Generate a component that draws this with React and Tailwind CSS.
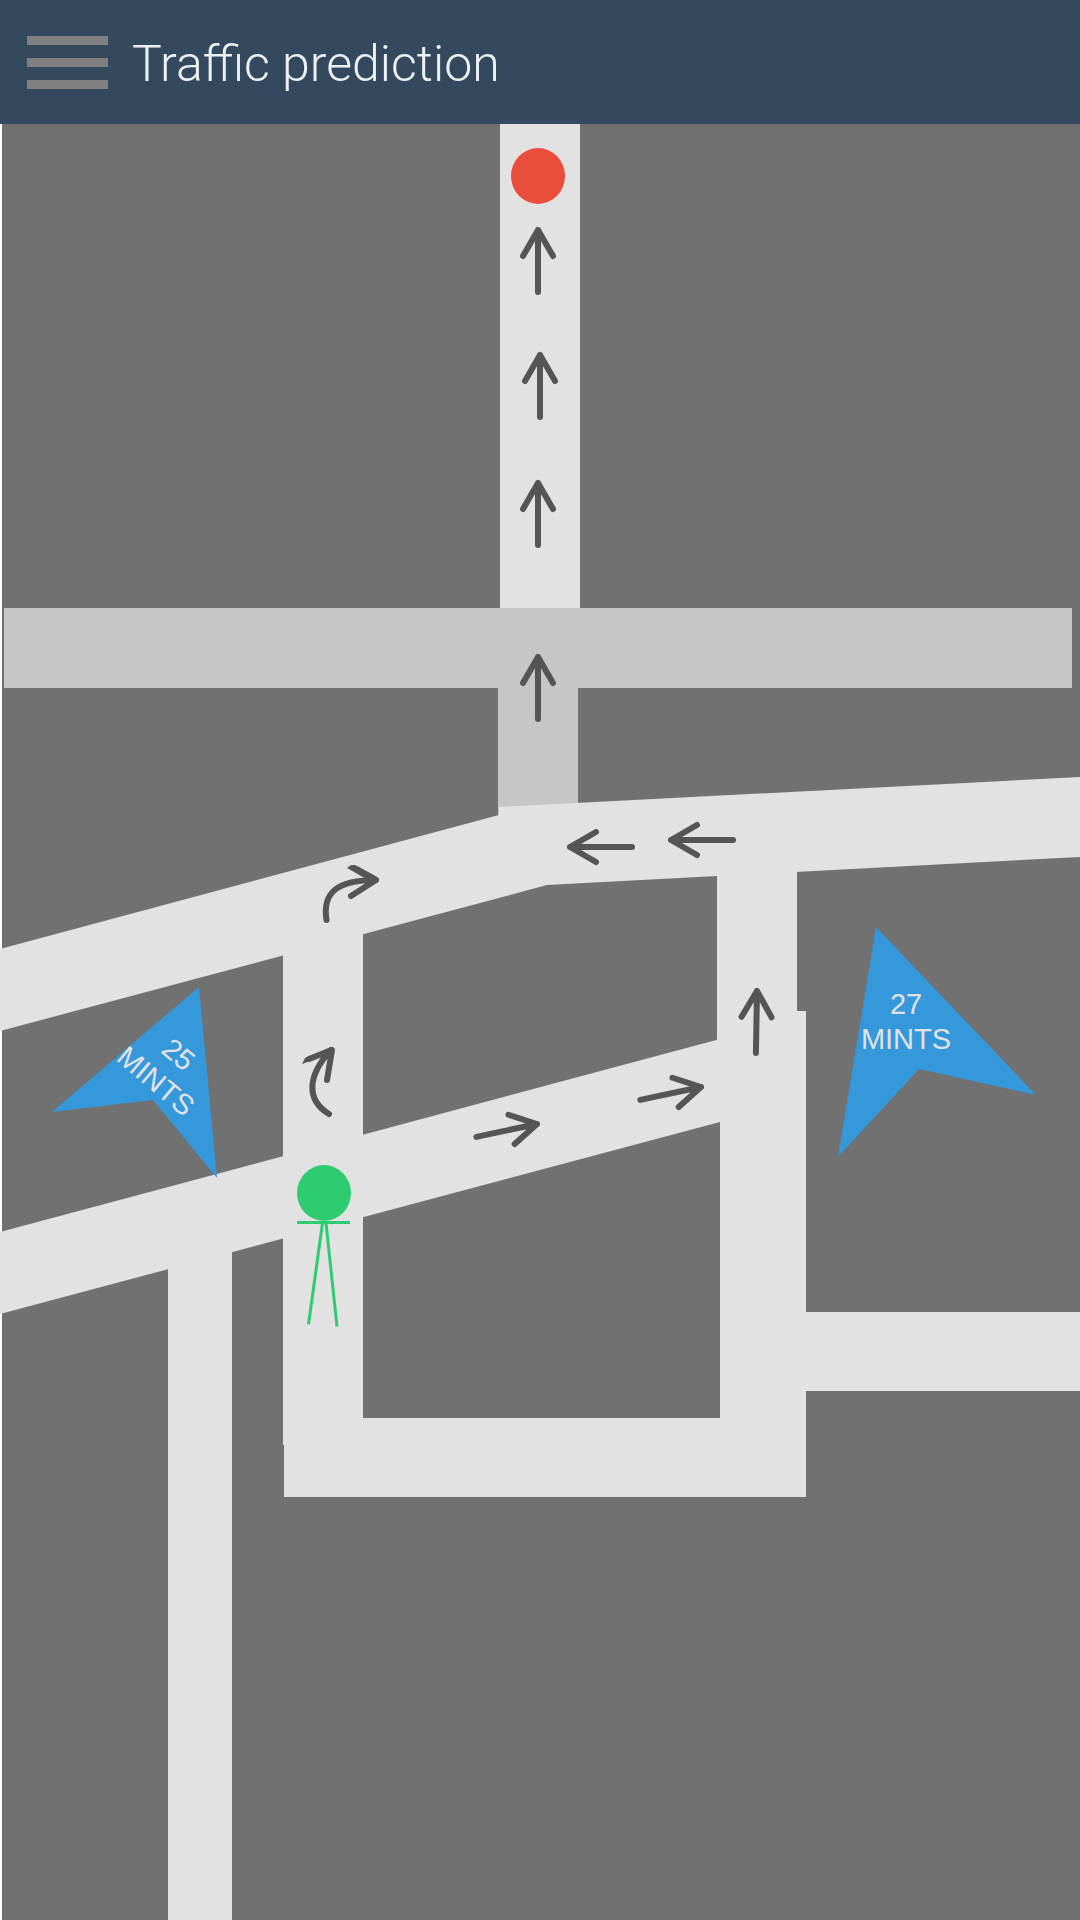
const ROAD = "fill-[#e2e2e2]";

function Arrow({ x, y, angle = 0 }) {
  return (
    <path
      d="M0 62V0M-15 26 0 0 15 26"
      transform={`translate(${x} ${y}) rotate(${angle})`}
      className="fill-none stroke-[#555555] stroke-6 [stroke-linecap:round] [stroke-linejoin:round]"
    />
  );
}

const ARROWS = [
  { x: 538, y: 230 },
  { x: 540, y: 355 },
  { x: 538, y: 483 },
  { x: 538, y: 657 },
  { x: 570, y: 847, angle: -90 },
  { x: 671, y: 840, angle: -90 },
  { x: 537, y: 1124, angle: 78 },
  { x: 701, y: 1087, angle: 78 },
  { x: 757, y: 991, angle: 1 },
];

function RoadMap() {
  return (
    <svg
      viewBox="0 124 1080 1796"
      className="block w-full"
      role="img"
      aria-label="Route map with predicted travel times"
    >
      <rect x="2" y="124" width="1078" height="1796" className="fill-[#717171]" />

      <g className={ROAD}>
        <rect x="500" y="124" width="80" height="484" />
        <polygon points="0,1232 720,1039 720,1122 0,1314" />
        <rect x="168" y="1240" width="64" height="680" />
        <rect x="283" y="930" width="80" height="515" />
        <rect x="284" y="1418" width="522" height="79" />
        <rect x="717" y="860" width="80" height="260" />
        <rect x="720" y="1011" width="86" height="420" />
        <rect x="800" y="1312" width="280" height="79" />
      </g>
      <path d="M4 608H1072V688H578V810H499V816H498V688H4Z" className="fill-[#c6c6c6]" />
      <polygon points="0,949 499,815 499,807 1080,777 1080,857 547,885 0,1031" className={ROAD} />

      <g className="fill-[#3498db]">
        <polygon points="199,987 52,1112 153,1100 217,1178" />
        <polygon points="876,927 1036,1095 919,1069 838,1157" />
      </g>
      <g
        className="fill-[#e2e2e2] text-[29px]"
        fontFamily="'Liberation Sans', Arial, sans-serif"
        textAnchor="middle"
      >
        <text transform="translate(172 1062) rotate(40)">
          <tspan x="0" y="0">25</tspan>
          <tspan x="0" y="35">MINTS</tspan>
        </text>
        <text transform="translate(906 1014)">
          <tspan x="0" y="0">27</tspan>
          <tspan x="0" y="35">MINTS</tspan>
        </text>
      </g>

      {ARROWS.map((arrow) => (
        <Arrow key={`${arrow.x}-${arrow.y}`} {...arrow} />
      ))}
      <g className="fill-none stroke-[#555555] stroke-6 [stroke-linecap:round] [stroke-linejoin:round]">
        <path d="M326.5 920C322 892 338 880 376 880M356 869 376 880 351 896" />
        <path d="M329 1114C306 1100 307 1076 331 1050M309 1059 332 1050 327 1080" />
      </g>
      <g className="fill-[#555555]">
        <polygon points="347,868 351,865 355,865 377,877 376,882 370,881" />
        <polygon points="302,1064 305,1058 331,1047 332,1053" />
      </g>

      <ellipse cx="538" cy="176" rx="27" ry="28" className="fill-[#e94e3d]" />
      <ellipse cx="324" cy="1193" rx="27" ry="28" className="fill-[#2ecc71]" />
      <path
        d="M297 1222.5H350M322.5 1223 308.5 1324.5M326 1223 337 1326.5"
        className="fill-none stroke-[#2ecc71] stroke-3"
      />
    </svg>
  );
}

export default function App() {
  return (
    <div className="min-h-screen w-full bg-white">
      <header className="flex h-[124px] items-center gap-6 bg-[#34495e] px-[27px]">
        <button type="button" aria-label="Open menu" className="flex w-[81px] flex-col gap-[13px]">
          <span className="h-[9px] bg-[#808080]" />
          <span className="h-[9px] bg-[#808080]" />
          <span className="h-[9px] bg-[#808080]" />
        </button>
        <h1 className="pt-1 font-[Roboto,sans-serif] text-[50px] leading-[60px] font-light text-[#ecf0f1]">
          Traffic prediction
        </h1>
      </header>
      <main>
        <RoadMap />
      </main>
    </div>
  );
}
